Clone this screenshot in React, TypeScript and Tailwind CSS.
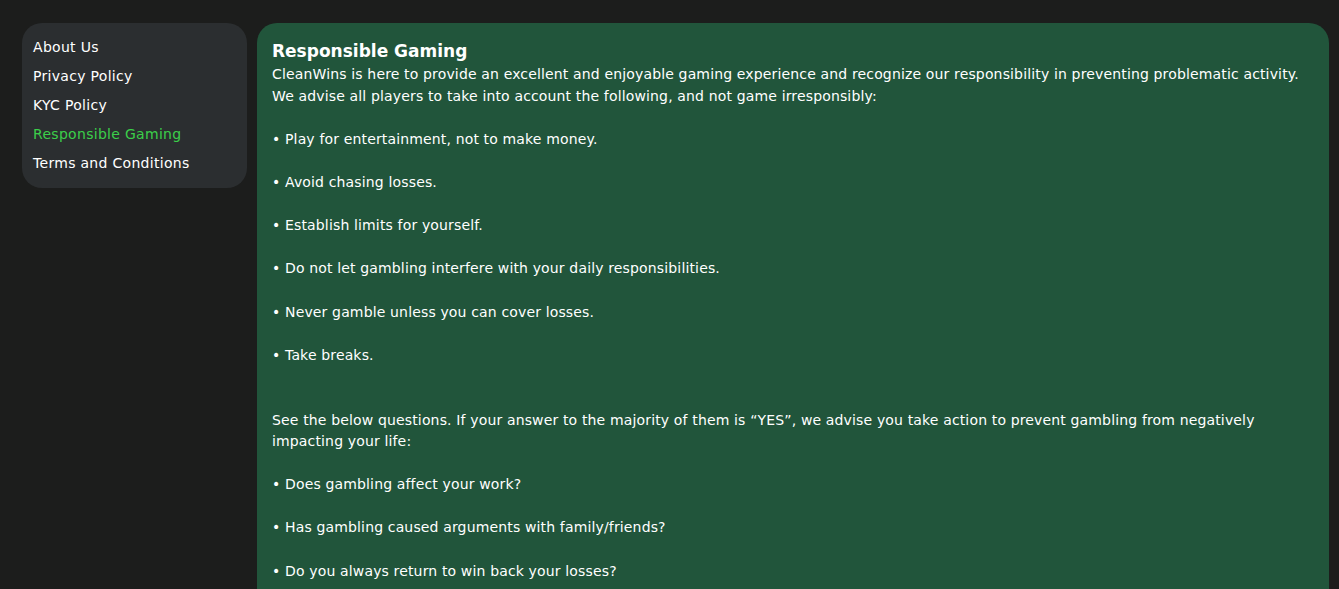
const navItems = [
  { label: "About Us", active: false },
  { label: "Privacy Policy", active: false },
  { label: "KYC Policy", active: false },
  { label: "Responsible Gaming", active: true },
  { label: "Terms and Conditions", active: false },
];

const body = `CleanWins is here to provide an excellent and enjoyable gaming experience and recognize our responsibility in preventing problematic activity. We advise all players to take into account the following, and not game irresponsibly:

• Play for entertainment, not to make money.

• Avoid chasing losses.

• Establish limits for yourself.

• Do not let gambling interfere with your daily responsibilities.

• Never gamble unless you can cover losses.

• Take breaks.


See the below questions. If your answer to the majority of them is “YES”, we advise you take action to prevent gambling from negatively impacting your life:

• Does gambling affect your work?

• Has gambling caused arguments with family/friends?

• Do you always return to win back your losses?`;

export default function App() {
  return (
    <div
      className="h-screen overflow-hidden bg-[#1c1d1c] pl-[22px] pr-[10px] pt-[23px]"
      style={{ fontFamily: '"DejaVu Sans", "Noto Sans", sans-serif' }}
    >
      <div className="flex h-full items-start gap-[10px]">
        {/* Sidebar */}
        <nav className="w-[225px] shrink-0 rounded-[20px] bg-[#2b2e30] px-[11px] py-[10px]">
          <ul>
            {navItems.map((item) => (
              <li
                key={item.label}
                className={`text-[14px] leading-[29px] tracking-[0.3px] ${item.active ? "text-[#3bce4a]" : "text-white"}`}
              >
                {item.label}
              </li>
            ))}
          </ul>
        </nav>

        {/* Content */}
        <main className="min-h-[620px] flex-1 rounded-t-[20px] bg-[#21553b] px-[15px] pt-[15px] text-white">
          <h1 className="text-[17px] font-bold leading-[26px]">Responsible Gaming</h1>
          <p className="whitespace-pre-line text-[14px] leading-[21.6px] tracking-[0.15px]">{body}</p>
        </main>
      </div>
    </div>
  );
}
